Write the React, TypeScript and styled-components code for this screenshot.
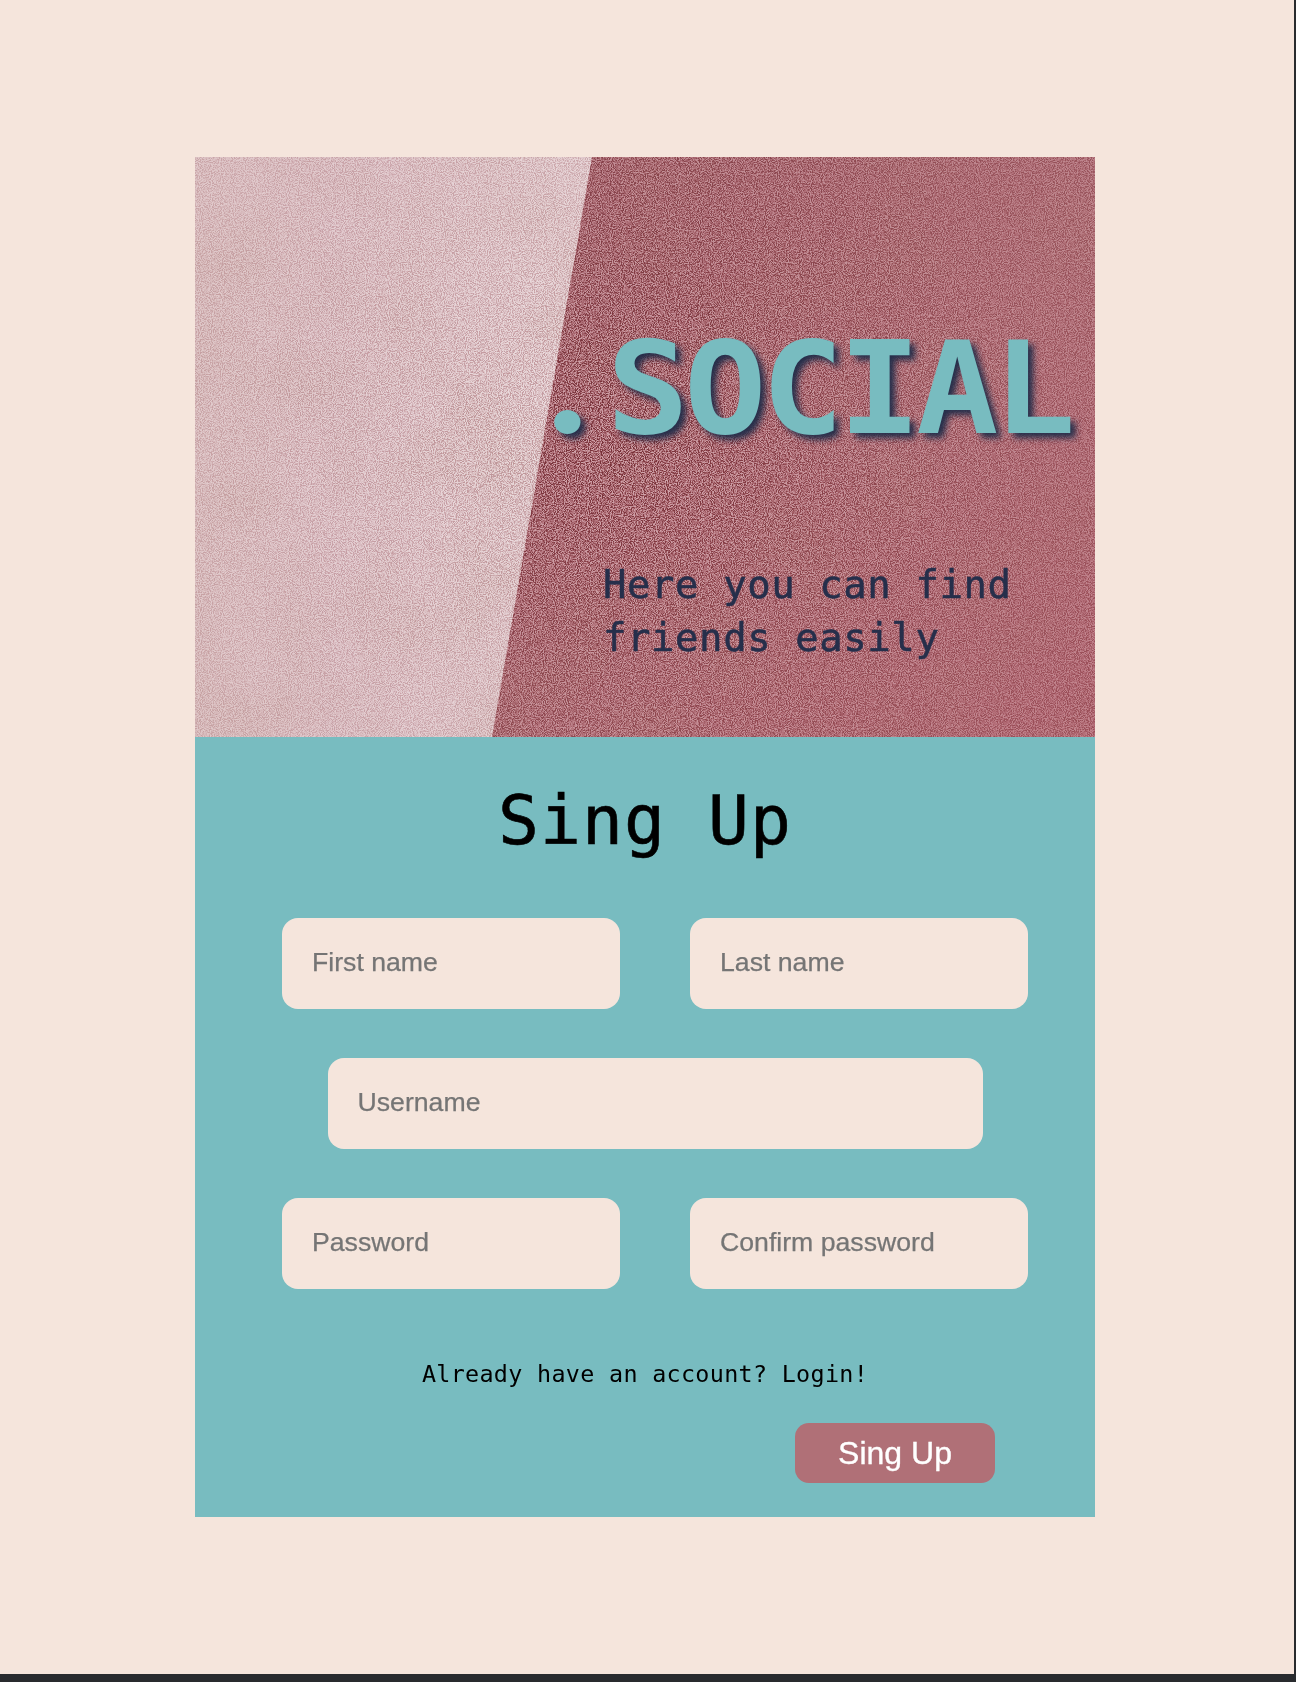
import React from "react";
import styled, { createGlobalStyle } from "styled-components";

const mono = `"DejaVu Sans Mono", monospace`;
const sans = `"Liberation Sans", Arial, sans-serif`;

const GlobalStyle = createGlobalStyle`
  *, *::before, *::after { box-sizing: border-box; }
  html, body { margin: 0; padding: 0; }
`;

const Page = styled.main`
  width: 1296px;
  height: 1682px;
  padding: 157px 199px 0 195px;
  background: #f5e5dc;
  border-right: 2px solid #292b2e;
  border-bottom: 8px solid #292b2e;
  overflow: hidden;
`;

const Card = styled.div`
  display: flex;
  flex-direction: column;
  width: 900px;
  height: 1360px;
`;

const Hero = styled.header`
  position: relative;
  display: flex;
  flex-direction: column;
  height: 580px;
  padding-top: 167px;
  overflow: hidden;
`;

const Backdrop = styled.svg`
  position: absolute;
  inset: 0;
  width: 900px;
  height: 580px;
`;

const Grain = styled.g`
  mix-blend-mode: soft-light;
`;

const Title = styled.h1`
  position: relative;
  height: 130px;
  margin: 0 0 0 333px;
  font: 700 128px/130px ${mono};
  letter-spacing: -4.8px;
  white-space: nowrap;
  color: #78bcc0;
  text-shadow: 5px 5px 6px #262f4b;
  transform: scaleX(1.07);
  transform-origin: left center;
`;

const Dot = styled.span`
  display: inline-block;
  width: 73.46px;
  text-align: center;
  font: 900 150px/0 Lato, sans-serif;
  letter-spacing: 0;
`;

const Tagline = styled.p`
  position: relative;
  width: 440px;
  margin: 104px 0 0 408px;
  font: 400 39px/53px ${mono};
  letter-spacing: 0.55px;
  -webkit-text-stroke: 0.5px #262f4b;
  color: #262f4b;
`;

const Form = styled.form`
  display: flex;
  flex-direction: column;
  height: 780px;
  padding: 38px 67px 34px 87px;
  background: #78bcc0;
`;

const Heading = styled.h2`
  margin: 0 20px 51px 0;
  text-align: center;
  font: 400 68px/92px ${mono};
  letter-spacing: 1.06px;
  -webkit-text-stroke: 0.6px #000;
  color: #000;
`;

const Fields = styled.div`
  display: flex;
  flex-direction: column;
  gap: 49px;
`;

const Row = styled.div`
  display: flex;
  gap: 70px;
  justify-content: center;
`;

const Field = styled.input<{ $wide?: boolean }>`
  width: ${(p) => (p.$wide ? 655 : 338)}px;
  height: 91px;
  padding: 0 30px 2px;
  border: 0;
  border-radius: 16px;
  outline: 0;
  background: #f5e5dc;
  font: 400 26.67px ${sans};
  color: #000;
  &::placeholder { color: #757575; opacity: 1; -webkit-text-stroke: 0.25px #757575; }
`;

const LoginLink = styled.a`
  margin: 69px 20px 0 0;
  text-align: center;
  font: 400 23.4px/32px ${mono};
  letter-spacing: 0.31px;
  color: #000;
`;

const Submit = styled.button`
  align-self: flex-end;
  width: 200px;
  height: 60px;
  margin: 33px 33px 0 0;
  padding: 0;
  border: 0;
  border-radius: 14px;
  background: #b07077;
  color: #fff;
  font: 400 32px ${sans};
  -webkit-text-stroke: 0.35px #fff;
`;

function PaperBackdrop() {
  return (
    <Backdrop viewBox="0 0 900 580" aria-hidden="true">
      <defs>
        <linearGradient id="pale" x1="0" y1="0" x2="1" y2="0">
          <stop offset="0" stopColor="#d8bbbd" />
          <stop offset="0.35" stopColor="#dabdc2" />
          <stop offset="1" stopColor="#dec5c8" />
        </linearGradient>
        <linearGradient id="rose" gradientUnits="userSpaceOnUse" x1="400" y1="100" x2="900" y2="580">
          <stop offset="0" stopColor="#ab6a73" />
          <stop offset="0.5" stopColor="#b16f78" />
          <stop offset="1" stopColor="#b26974" />
        </linearGradient>
        <radialGradient id="spread" gradientUnits="userSpaceOnUse" cx="420" cy="290" r="460">
          <stop offset="0" stopColor="#fff" />
          <stop offset="0.45" stopColor="#b8b8b8" />
          <stop offset="1" stopColor="#747474" />
        </radialGradient>
        <mask id="fade">
          <rect width="900" height="580" fill="url(#spread)" />
        </mask>
        <filter id="grain" x="0" y="0" width="100%" height="100%" colorInterpolationFilters="sRGB">
          <feTurbulence type="fractalNoise" baseFrequency="0.91" numOctaves="4" seed="4" />
          <feColorMatrix values="3.2 0 0 0 -1.12  3.2 0 0 0 -1.12  3.2 0 0 0 -1.12  0 0 0 0 1" />
        </filter>
        <filter id="mottle" x="0" y="0" width="100%" height="100%" colorInterpolationFilters="sRGB">
          <feTurbulence type="fractalNoise" baseFrequency="0.012" numOctaves="4" seed="9" />
          <feColorMatrix values="0 0 0 0 0.67  0 0 0 0 0.52  0 0 0 0 0.45  1.2 0 0 0 -0.45" />
        </filter>
      </defs>
      <rect width="900" height="580" fill="url(#rose)" />
      <path d="M0 0H397L297 580H0Z" fill="url(#pale)" />
      <rect width="900" height="580" filter="url(#mottle)" opacity="0.15" />
      <Grain mask="url(#fade)">
        <rect width="900" height="580" filter="url(#grain)" />
      </Grain>
    </Backdrop>
  );
}

export default function App() {
  return (
    <>
      <GlobalStyle />
      <Page>
        <Card>
          <Hero>
            <PaperBackdrop />
            <Title><Dot>.</Dot>SOCIAL</Title>
            <Tagline>Here you can find friends easily</Tagline>
          </Hero>
          <Form onSubmit={(e) => e.preventDefault()}>
            <Heading>Sing Up</Heading>
            <Fields>
              <Row>
                <Field placeholder="First name" />
                <Field placeholder="Last name" />
              </Row>
              <Row>
                <Field $wide placeholder="Username" />
              </Row>
              <Row>
                <Field type="password" placeholder="Password" />
                <Field type="password" placeholder="Confirm password" />
              </Row>
            </Fields>
            <LoginLink>Already have an account? Login!</LoginLink>
            <Submit>Sing Up</Submit>
          </Form>
        </Card>
      </Page>
    </>
  );
}
